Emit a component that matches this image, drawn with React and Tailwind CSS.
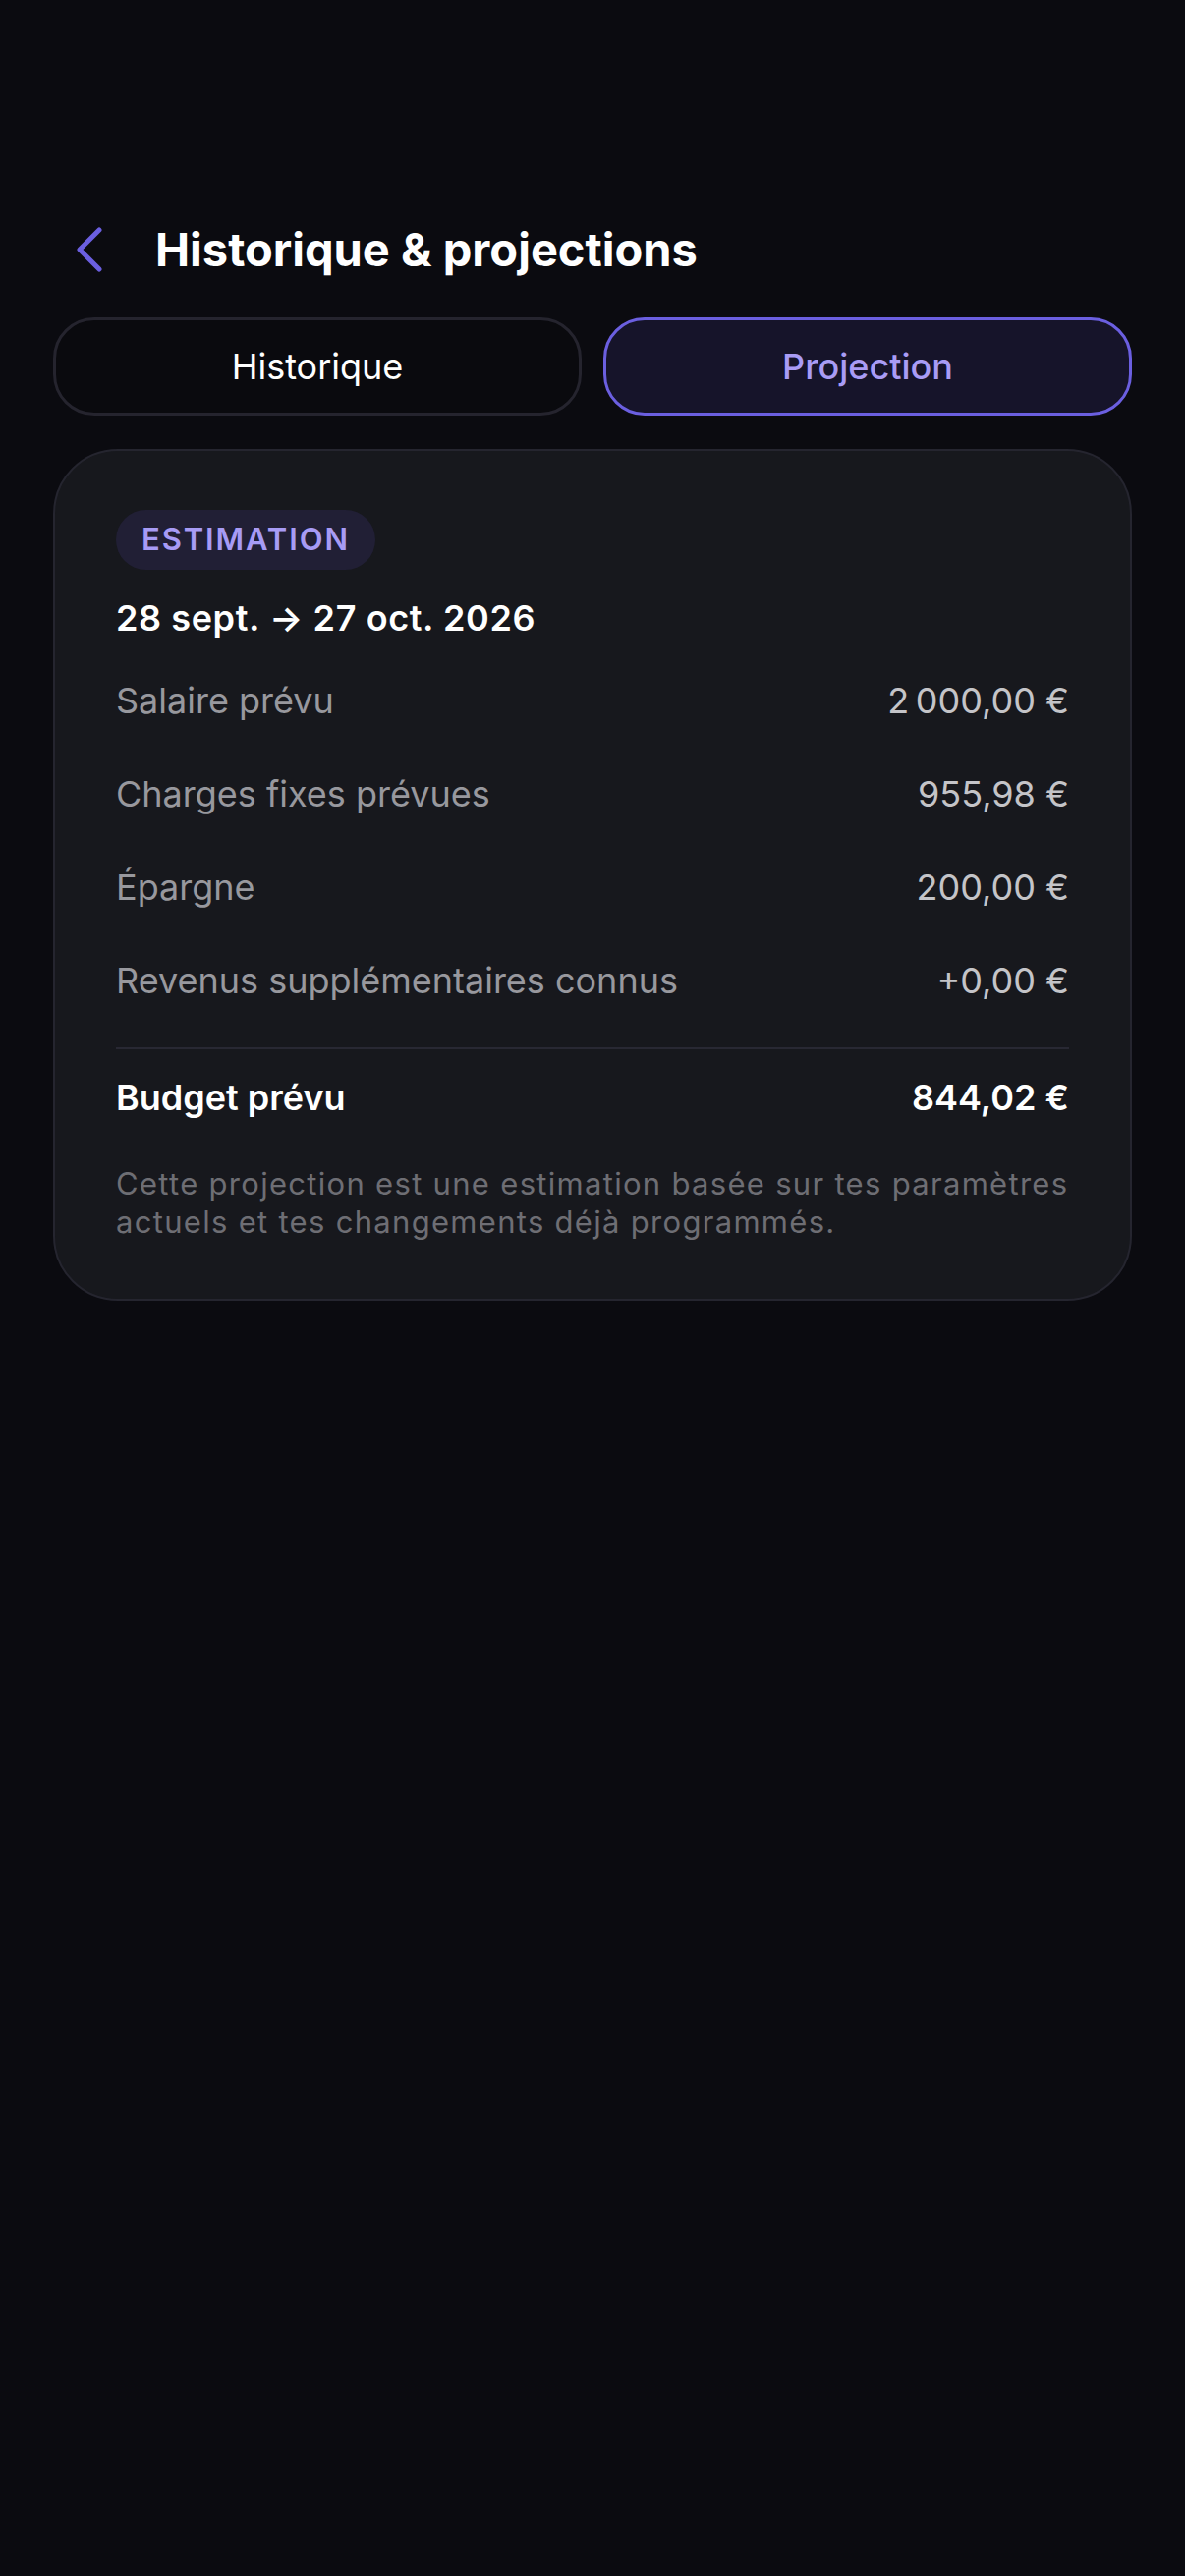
export default function App() {
  const rows = [
    ["Salaire prévu", "2\u202F000,00 €"],
    ["Charges fixes prévues", "955,98 €"],
    ["Épargne", "200,00 €"],
    ["Revenus supplémentaires connus", "+0,00 €"],
  ];
  return (
    <div className="min-h-[2622px] w-full bg-[#0b0b10] pt-[221px] font-['Inter','Noto_Sans',sans-serif] text-white">
      <div className="flex h-[66px] items-center pl-[74px]">
        <svg width="32" height="48" viewBox="0 0 32 48" fill="none" className="shrink-0">
          <polyline points="27,4 7,24 27,44" stroke="#6b5fe0" strokeWidth="5" strokeLinecap="round" strokeLinejoin="round" />
        </svg>
        <h1 className="ml-[52px] text-[47px] font-bold leading-[66px] tracking-[0px] text-white">
          Historique &amp; projections
        </h1>
      </div>

      <div className="mt-[36px] grid grid-cols-2 gap-[22px] px-[54px]">
        <button className="flex h-[100px] items-center justify-center rounded-[42px] border-[3px] border-[#25242e] bg-[#0a0a0e] text-[36px] font-normal text-white">
          Historique
        </button>
        <button className="flex h-[100px] items-center justify-center rounded-[42px] border-[3px] border-[#6b5fe0] bg-[#16142a] text-[36px] font-medium text-[#a99cf5]">
          Projection
        </button>
      </div>

      <div className="mx-[54px] mt-[34px] rounded-[66px] border-2 border-[#25252f] bg-[#17181d] px-[62px] pt-[60px] pb-[59px]">
        <div className="inline-flex h-[61px] items-center rounded-full bg-[#211f35] px-[26px] text-[31px] font-semibold tracking-[1.9px] text-[#a79bf5]">
          ESTIMATION
        </div>
        <div className="mt-[27px] text-[36px] font-semibold leading-[44px] tracking-[0.6px] text-white">
          28 sept. → 27 oct. 2026
        </div>
        <div className="mt-[14px] flex flex-col">
          {rows.map(([l, v]) => (
            <div key={l} className="flex h-[95px] items-center justify-between text-[36px] leading-[44px]">
              <span className="text-[#98989e]">{l}</span>
              <span className="text-[#c4c4c8]">{v}</span>
            </div>
          ))}
        </div>
        <div className="mt-[21px] h-[2px] bg-[#282833]" />
        <div className="mt-[27px] flex items-center justify-between text-[36px] font-semibold leading-[44px] text-white">
          <span>Budget prévu</span>
          <span>844,02 €</span>
        </div>
        <p className="mt-[46px] text-[31px] leading-[39px] tracking-[1.3px] text-[#6e6e74]">
          Cette projection est une estimation basée sur tes paramètres actuels et tes changements déjà programmés.
        </p>
      </div>
    </div>
  );
}
